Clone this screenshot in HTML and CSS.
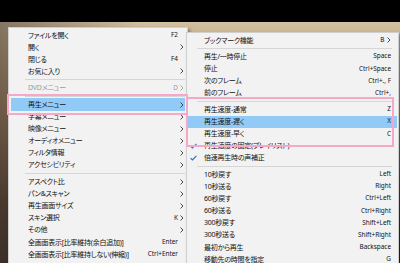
FILE: index.html
```html
<!DOCTYPE html>
<html lang="ja">
<head>
<meta charset="utf-8">
<title>Menu</title>
<link rel="stylesheet" href="styles.css">
</head>
<body>
<div class="screen">
  <div class="topbar"></div>
  <div class="scene">
    <div class="menu menu-main">
      <div class="item"><span class="label">ファイルを開く</span><span class="key">F2</span><span class="sub"></span></div>
      <div class="item"><span class="label">開く</span><span class="key"></span><span class="sub"><svg width="4" height="6" viewBox="0 0 4 6"><polyline points="0.5,0.5 3,3 0.5,5.5"/></svg></span></div>
      <div class="item"><span class="label">閉じる</span><span class="key">F4</span><span class="sub"></span></div>
      <div class="item"><span class="label">お気に入り</span><span class="key"></span><span class="sub"><svg width="4" height="6" viewBox="0 0 4 6"><polyline points="0.5,0.5 3,3 0.5,5.5"/></svg></span></div>
      <div class="sep"></div>
      <div class="item disabled"><span class="label">DVDメニュー</span><span class="key">D</span><span class="sub"><svg width="4" height="6" viewBox="0 0 4 6"><polyline points="0.5,0.5 3,3 0.5,5.5"/></svg></span></div>
      <div class="sep"></div>
      <div class="item active"><span class="label">再生メニュー</span><span class="key"></span><span class="sub"><svg width="4" height="6" viewBox="0 0 4 6"><polyline points="0.5,0.5 3,3 0.5,5.5"/></svg></span></div>
      <div class="item"><span class="label">字幕メニュー</span><span class="key"></span><span class="sub"><svg width="4" height="6" viewBox="0 0 4 6"><polyline points="0.5,0.5 3,3 0.5,5.5"/></svg></span></div>
      <div class="item"><span class="label">映像メニュー</span><span class="key"></span><span class="sub"><svg width="4" height="6" viewBox="0 0 4 6"><polyline points="0.5,0.5 3,3 0.5,5.5"/></svg></span></div>
      <div class="item"><span class="label">オーディオメニュー</span><span class="key"></span><span class="sub"><svg width="4" height="6" viewBox="0 0 4 6"><polyline points="0.5,0.5 3,3 0.5,5.5"/></svg></span></div>
      <div class="item"><span class="label">フィルタ情報</span><span class="key"></span><span class="sub"><svg width="4" height="6" viewBox="0 0 4 6"><polyline points="0.5,0.5 3,3 0.5,5.5"/></svg></span></div>
      <div class="item"><span class="label">アクセシビリティ</span><span class="key"></span><span class="sub"><svg width="4" height="6" viewBox="0 0 4 6"><polyline points="0.5,0.5 3,3 0.5,5.5"/></svg></span></div>
      <div class="sep"></div>
      <div class="item"><span class="label">アスペクト比</span><span class="key"></span><span class="sub"><svg width="4" height="6" viewBox="0 0 4 6"><polyline points="0.5,0.5 3,3 0.5,5.5"/></svg></span></div>
      <div class="item"><span class="label">パン&amp;スキャン</span><span class="key"></span><span class="sub"><svg width="4" height="6" viewBox="0 0 4 6"><polyline points="0.5,0.5 3,3 0.5,5.5"/></svg></span></div>
      <div class="item"><span class="label">再生画面サイズ</span><span class="key"></span><span class="sub"><svg width="4" height="6" viewBox="0 0 4 6"><polyline points="0.5,0.5 3,3 0.5,5.5"/></svg></span></div>
      <div class="item"><span class="label">スキン選択</span><span class="key">K</span><span class="sub"><svg width="4" height="6" viewBox="0 0 4 6"><polyline points="0.5,0.5 3,3 0.5,5.5"/></svg></span></div>
      <div class="item"><span class="label">その他</span><span class="key"></span><span class="sub"><svg width="4" height="6" viewBox="0 0 4 6"><polyline points="0.5,0.5 3,3 0.5,5.5"/></svg></span></div>
      <div class="item"><span class="label">全画面表示[比率維持(余白追加)]</span><span class="key">Enter</span><span class="sub"></span></div>
      <div class="item"><span class="label">全画面表示[比率維持しない(伸縮)]</span><span class="key">Ctrl+Enter</span><span class="sub"></span></div>
    </div>

    <div class="menu menu-play">
      <div class="item"><span class="check"></span><span class="label">ブックマーク機能</span><span class="key">B<svg class="chev" width="4" height="6" viewBox="0 0 4 6"><polyline points="0.5,0.5 3,3 0.5,5.5"/></svg></span></div>
      <div class="sep"></div>
      <div class="item"><span class="check"></span><span class="label">再生/一時停止</span><span class="key">Space</span></div>
      <div class="item"><span class="check"></span><span class="label">停止</span><span class="key">Ctrl+Space</span></div>
      <div class="item"><span class="check"></span><span class="label">次のフレーム</span><span class="key">Ctrl+., F</span></div>
      <div class="item"><span class="check"></span><span class="label">前のフレーム</span><span class="key">Ctrl+,</span></div>
      <div class="sep"></div>
      <div class="item"><span class="check"></span><span class="label">再生速度-通常</span><span class="key">Z</span></div>
      <div class="item active"><span class="check"></span><span class="label">再生速度-遅く</span><span class="key">X</span></div>
      <div class="item"><span class="check"></span><span class="label">再生速度-早く</span><span class="key">C</span></div>
      <div class="item"><span class="check"><svg width="7" height="6" viewBox="0 0 7 6"><polyline points="0.6,3.2 2.5,5 6.4,0.8"/></svg></span><span class="label">再生速度の固定(プレイリスト)</span><span class="key"></span></div>
      <div class="item"><span class="check"><svg width="7" height="6" viewBox="0 0 7 6"><polyline points="0.6,3.2 2.5,5 6.4,0.8"/></svg></span><span class="label">倍速再生時の声補正</span><span class="key"></span></div>
      <div class="sep"></div>
      <div class="item"><span class="check"></span><span class="label">10秒戻す</span><span class="key">Left</span></div>
      <div class="item"><span class="check"></span><span class="label">10秒送る</span><span class="key">Right</span></div>
      <div class="item"><span class="check"></span><span class="label">60秒戻す</span><span class="key">Ctrl+Left</span></div>
      <div class="item"><span class="check"></span><span class="label">60秒送る</span><span class="key">Ctrl+Right</span></div>
      <div class="item"><span class="check"></span><span class="label">300秒戻す</span><span class="key">Shift+Left</span></div>
      <div class="item"><span class="check"></span><span class="label">300秒送る</span><span class="key">Shift+Right</span></div>
      <div class="item"><span class="check"></span><span class="label">最初から再生</span><span class="key">Backspace</span></div>
      <div class="item"><span class="check"></span><span class="label">移動先の時間を指定</span><span class="key">G</span></div>
    </div>

    <div class="mark mark-main"></div>
    <div class="mark mark-speed"></div>
  </div>
</div>
</body>
</html>
```

FILE: styles.css
```css
html, body {
  margin: 0;
  padding: 0;
  background: #000;
}

.screen {
  width: 400px;
  height: 263px;
  overflow: hidden;
  display: flex;
  flex-direction: column;
  font-family: "Noto Sans", "Noto Sans CJK JP", sans-serif;
  color: #111;
}

.topbar {
  height: 22px;
  flex: none;
  background: #000;
}

.scene {
  position: relative;
  flex: 1;
  background:
    linear-gradient(to right, rgba(70, 60, 52, 0.55) 0, rgba(70, 60, 52, 0) 35%),
    linear-gradient(to bottom, #d2bf9f 0, #c2a882 12%, #8e6d52 45%, #4a3427 75%, #2e2019 100%);
}

.menu {
  position: absolute;
  background: #f2f2f2;
  border: 1px solid #cfcfcf;
  box-shadow: 2px 2px 3px rgba(0, 0, 0, 0.35);
  display: flex;
  flex-direction: column;
}

.menu-main {
  left: 8px;
  top: 5px;
  width: 174px;
  padding: 1px 2px 20px;
}

.menu-play {
  left: 186px;
  top: 10px;
  width: 209px;
  padding: 1px 1px 20px;
}

.item {
  height: 12.1px;
  display: grid;
  align-items: center;
  font-size: 7px;
  line-height: 1;
  white-space: nowrap;
}

.menu-main .item {
  grid-template-columns: 1fr auto 7px;
  padding-left: 17px;
}

.menu-play .item {
  grid-template-columns: 16px 1fr auto;
  padding-right: 6px;
}

.label {
  font-feature-settings: "palt";
  letter-spacing: -0.25px;
}

.key {
  font-size: 6.4px;
  display: flex;
  align-items: center;
  justify-content: flex-end;
}

.sub {
  display: flex;
  justify-content: center;
  align-items: center;
}

.sub svg, .chev {
  fill: none;
  stroke: #3a3a3a;
  stroke-width: 0.9;
}

.chev {
  margin-left: 2.5px;
}

.check {
  display: flex;
  align-items: center;
  padding-left: 2px;
}

.check svg {
  fill: none;
  stroke: #2f74c8;
  stroke-width: 1.2;
}

.item.active {
  background: #91c9f7;
}

.item.disabled {
  color: #9a9a9a;
}

.item.disabled .sub svg {
  stroke: #9a9a9a;
}

.sep {
  height: 1px;
  margin: 1.75px 0 1.75px 14px;
  background: #d6d6d6;
}

.menu-play .sep {
  margin: 1.75px 5px 1.75px 9px;
}

.mark {
  position: absolute;
  border: 2.75px solid #f5a8c7;
  box-sizing: border-box;
}

.mark-main {
  left: 7px;
  top: 72px;
  width: 181px;
  height: 21px;
}

.mark-speed {
  left: 186px;
  top: 75px;
  width: 208px;
  height: 50px;
}
```
